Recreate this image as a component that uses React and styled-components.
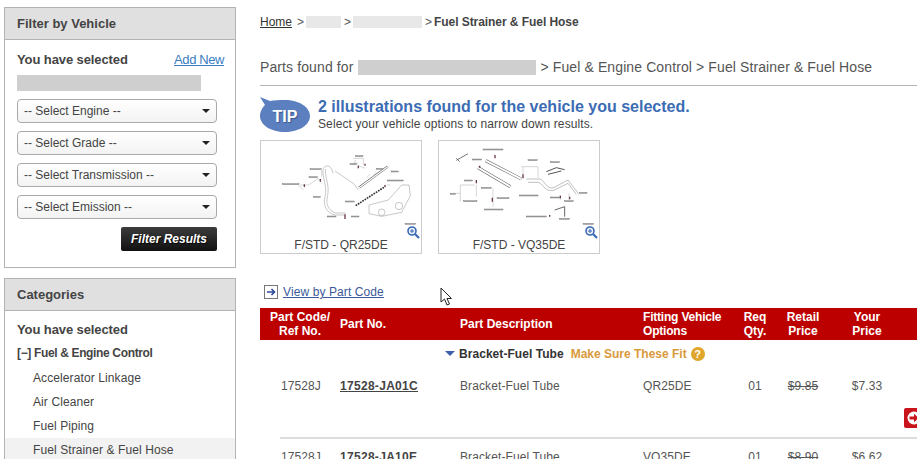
import React from "react";
import styled, { createGlobalStyle } from "styled-components";

const Global = createGlobalStyle`
  html, body { margin: 0; padding: 0; width: 917px; height: 459px; overflow: hidden; background: #fff; }
  body { font-family: "Liberation Sans", Arial, sans-serif; font-size: 12px; color: #444; }
  #root { width: 917px; height: 459px; overflow: hidden; }
`;

const Page = styled.div`
  display: flex;
  align-items: flex-start;
  padding: 7px 0 0 4px;
  width: 1000px;
`;
const Sidebar = styled.aside`
  width: 232px;
  flex: none;
  display: flex;
  flex-direction: column;
  gap: 10px;
`;
const Panel = styled.section`
  border: 1px solid #b3b3b3;
  background: #fff;
  height: ${(p) => p.$h}px;
  box-sizing: border-box;
`;
const PanelHead = styled.h2`
  margin: 0;
  height: 32px;
  line-height: 31px;
  box-sizing: border-box;
  background: #e0e0e0;
  border-bottom: 1px solid #b3b3b3;
  padding-left: 12px;
  font-size: 13px;
  font-weight: bold;
  color: #444;
`;
const PanelBody = styled.div`
  padding: ${(p) => p.$top}px 18px 0 12px;
`;
const SelectedRow = styled.div`
  display: flex;
  justify-content: space-between;
  align-items: center;
  height: 16px;
`;
const Strong = styled.strong`
  font-size: 13px;
  letter-spacing: -0.1px;
  color: #444;
`;
const BlueLink = styled.a`
  color: #3a7dbf;
  font-size: 13px;
  letter-spacing: -0.4px;
  text-decoration: underline;
  margin-right: -7px;
`;
const Redact = styled.span`
  display: ${(p) => (p.$block ? "block" : "inline-block")};
  flex: none;
  width: ${(p) => p.$w}px;
  height: ${(p) => p.$h}px;
  background: ${(p) => p.$c || "#cfcfcf"};
`;
const VehicleBar = styled(Redact)`
  margin: 8px 0;
`;
const FoundBar = styled(Redact)`
  margin-left: 1px;
`;
const Select = styled.div`
  box-sizing: border-box;
  width: 200px;
  height: 24px;
  margin-bottom: 8px;
  padding: 0 6px 1px 6px;
  border: 1px solid #a9a9a9;
  border-radius: 4px;
  background: linear-gradient(#fff, #f3f3f3);
  display: flex;
  align-items: center;
  justify-content: space-between;
  font-size: 12px;
  color: #444;
  &::after {
    content: "";
    border-left: 4px solid transparent;
    border-right: 4px solid transparent;
    border-top: 4px solid #222;
  }
`;
const FilterButton = styled.button`
  display: block;
  margin: 8px 0 0 104px;
  width: 96px;
  height: 24px;
  padding: 0;
  border: 0;
  border-radius: 2px;
  background: linear-gradient(#3c3c3c, #111);
  color: #fff;
  font: italic bold 12px "Liberation Sans", Arial, sans-serif;
  text-shadow: 1px 1px 1px #000;
`;
const TreeHead = styled.div`
  font-weight: bold;
  font-size: 12px;
  line-height: 24px;
  letter-spacing: -0.35px;
  color: #444;
  margin: 4px 0 1px;
`;
const TreeList = styled.ul`
  list-style: none;
  margin: 0 -18px 0 -12px;
  padding: 0;
`;
const TreeItem = styled.li`
  height: 24px;
  line-height: 24px;
  padding-left: 28px;
  font-size: 12px;
  letter-spacing: 0.1px;
  color: #444;
  background: ${(p) => (p.$active ? "#f2f2f2" : "transparent")};
`;

const Main = styled.main`
  margin-left: 24px;
  width: 700px;
  flex: none;
`;
const Crumbs = styled.nav`
  height: 14px;
  line-height: 14px;
  margin-top: 8px;
  font-size: 12px;
  color: #555;
  display: flex;
  align-items: center;
  gap: 3px;
`;
const CrumbLink = styled.a`
  color: #333;
  text-decoration: underline;
  margin-right: 2px;
`;
const Sep = styled.span`
  display: block;
  flex: none;
  width: 6px;
  white-space: nowrap;
`;
const CrumbCurrent = styled.b`
  color: #444;
  letter-spacing: -0.06px;
`;
const Found = styled.div`
  margin-top: 30px;
  padding-bottom: 10px;
  height: 16px;
  line-height: 16px;
  font-size: 14px;
  letter-spacing: 0.11px;
  color: #555;
  border-bottom: 1px solid #b5b5b5;
  display: flex;
  align-items: center;
  gap: 4px;
`;
const TipRow = styled.div`
  display: flex;
  margin-top: 11px;
  height: 36px;
`;
const TipBubble = styled.div`
  position: relative;
  width: 50px;
  height: 36px;
  flex: none;
  display: flex;
  align-items: flex-end;
  justify-content: center;
  padding-bottom: 7px;
  box-sizing: border-box;
  font-size: 16px;
  font-weight: bold;
  color: #fff;
  text-shadow: 1px 1px 1px #3a5a96;
  line-height: 18px;
  & > svg { position: absolute; left: 0; top: 0; }
  & > span { position: relative; }
`;
const TipText = styled.div`
  margin: 1px 0 0 8px;
`;
const TipTitle = styled.div`
  font-size: 16px;
  font-weight: bold;
  line-height: 18px;
  color: #3c6cb4;
`;
const TipSub = styled.div`
  font-size: 12px;
  line-height: 14px;
  letter-spacing: 0.1px;
  color: #444;
  margin-top: 1px;
`;
const Cards = styled.div`
  display: flex;
  gap: 16px;
  margin-top: 7px;
`;
const Card = styled.figure`
  position: relative;
  margin: 0;
  box-sizing: border-box;
  width: 162px;
  height: 114px;
  border: 1px solid #ccc;
  & > svg { display: block; }
`;
const Caption = styled.figcaption`
  text-align: center;
  font-size: 12px;
  line-height: 14px;
  color: #444;
  margin-top: 2px;
`;
const ZoomBadge = styled.svg`
  position: absolute;
  right: 1px;
  bottom: 14px;
`;
const ViewRow = styled.div`
  display: flex;
  align-items: center;
  gap: 5px;
  margin: 31px 0 0 4px;
  height: 14px;
`;
const ViewIcon = styled.svg`
  flex: none;
`;
const ViewLink = styled.a`
  color: #3c5a9a;
  font-size: 12px;
  letter-spacing: 0.1px;
  text-decoration: underline;
`;
const Cursor = styled.svg`
  position: absolute;
  left: 440px;
  top: 287px;
`;
const columns = "80px 120px 183px 92px 40px 56px 72px 57px";
const HeadRow = styled.div`
  display: grid;
  grid-template-columns: ${columns};
  margin-top: 9px;
  height: 32px;
  background: #bc0000;
  color: #fff;
  font-weight: bold;
  font-size: 12px;
  line-height: 14px;
  align-items: center;
`;
const HeadCell = styled.div`
  text-align: ${(p) => (p.$c ? "center" : "left")};
  letter-spacing: ${(p) => (p.$tight ? "-0.2px" : "0")};
`;
const GroupRow = styled.div`
  display: flex;
  align-items: center;
  height: 28px;
  padding-left: 185px;
  font-size: 12px;
  font-weight: bold;
  gap: 5px;
`;
const GroupArrow = styled.span`
  border-left: 5px solid transparent;
  border-right: 5px solid transparent;
  border-top: 5px solid #3d5fae;
  margin-right: -1px;
  margin-top: -2px;
`;
const GroupName = styled.span`
  color: #333;
  letter-spacing: 0.05px;
`;
const Fit = styled.span`
  color: #d99a3c;
  margin-left: 2px;
`;
const Help = styled.span`
  width: 14px;
  height: 14px;
  border-radius: 50%;
  background: #e0a52b;
  color: #fff;
  font-size: 11px;
  line-height: 14px;
  text-align: center;
  margin-left: -1px;
`;
const PartRow = styled.div`
  margin-left: 20px;
  border-bottom: ${(p) => (p.$last ? "0" : "2px solid #ddd")};
  height: ${(p) => p.$h}px;
  box-sizing: border-box;
  padding-top: ${(p) => p.$top}px;
`;
const PartCells = styled.div`
  display: grid;
  grid-template-columns: 60px 120px 183px 92px 40px 56px 72px;
  height: 14px;
  line-height: 14px;
  font-size: 12px;
  letter-spacing: 0.1px;
  color: #555;
`;
const PartCell = styled.div`
  text-align: ${(p) => (p.$c ? "center" : "left")};
  padding-left: ${(p) => (p.$pad ? "1px" : "0")};
  white-space: nowrap;
`;
const PartNo = styled.a`
  font-weight: bold;
  letter-spacing: 0.3px;
  color: #444;
  text-decoration: ${(p) => (p.$u ? "underline" : "none")};
`;
const Old = styled.s`
  color: #555;
`;
const Actions = styled.div`
  margin: 15px 0 0 624px;
`;
const AddButton = styled.button`
  display: flex;
  align-items: center;
  width: 40px;
  height: 20px;
  padding: 0 0 0 3px;
  border: 0;
  border-radius: 2px;
  background: #c8141a;
`;

const Labels = ({ items }) =>
  items.map(([x, y, w], i) => (
    <rect key={i} x={x} y={y} width={w} height="3" fill="#b4b4b4" />
  ));

const Diagram1 = () => (
  <svg width="160" height="95" viewBox="18 18 480 285" fill="none" stroke="#666" strokeWidth="1.2">
    <Labels items={[[82,146,50],[165,101,34],[162,125,26],[176,184,20],[217,243,26],[290,243,22],[272,198,26],[397,135,48],[408,108,22],[302,62,22],[285,86,20],[365,100,18],[450,265,32]]} />
    <path d="M205 100C215 84 232 96 234 115M240 108L296 146L310 165M205 100C200 130 218 150 210 185C204 210 212 232 240 240L272 240M212 102C208 130 226 150 217 186C212 208 220 226 242 234L272 234" stroke="#999" strokeWidth="1.6" />
    <path d="M135 150H160L190 130L200 145M200 105V125M130 150L145 165M300 75V90M295 70H325V90M290 85H310M335 128L345 118M355 120L365 110M305 90L330 100M405 150H395" stroke="#999" />
    <path d="M312 158L398 95" stroke="#555" strokeWidth="7" />
    <path d="M312 158L398 95" stroke="#fff" strokeWidth="4" />
    <path d="M302 212L390 155" stroke="#333" strokeWidth="5" strokeDasharray="5 3" />
    <path d="M342 210L400 195L440 150L462 150L466 182L440 232L380 244L342 236Z" stroke="#888" strokeWidth="1.4" />
    <circle cx="380" cy="232" r="10" stroke="#888" strokeWidth="1.4" />
    <circle cx="432" cy="213" r="11" stroke="#888" strokeWidth="1.4" />
    <path d="M148 148v8M196 132v8M270 238v14M310 92v8M330 86v6M390 150v6" stroke="#6a3a50" strokeWidth="4" />
  </svg>
);

const Diagram2 = () => (
  <svg width="160" height="95" viewBox="18 18 480 285" fill="none" stroke="#666" strokeWidth="1.2">
    <Labels items={[[150,42,60],[118,72,28],[285,74,28],[352,80,28],[95,135,24],[52,175,16],[92,197,40],[145,157,30],[192,188,36],[260,180,55],[155,222,55],[280,243,60],[380,250,30],[352,186,28],[440,172,22],[395,197,26],[450,265,32]]} />
    <path d="M70 76L105 56M70 70L80 80" stroke="#444" strokeWidth="2.2" />
    <path d="M135 98L232 155" stroke="#555" strokeWidth="9" />
    <path d="M135 98L232 155" stroke="#fff" strokeWidth="6" />
    <path d="M158 77L265 132" stroke="#555" strokeWidth="9" />
    <path d="M158 77L265 132" stroke="#fff" strokeWidth="6" />
    <path d="M280 132H320C335 135 340 165 362 158L405 135L438 178M285 142H315C330 145 335 172 362 166L405 145L430 178" stroke="#888" strokeWidth="1.6" />
    <path d="M340 110L370 98L395 104M345 118L385 108" stroke="#555" strokeWidth="3" />
    <path d="M82 150H125M82 150V200M60 175H82M130 150V185M180 160V215M265 95H315V130M270 95V120M382 180V195M408 175V195" stroke="#999" />
    <path d="M365 225L395 215L395 245" stroke="#666" strokeWidth="3" />
    <path d="M186 60v10M140 92v6M270 118v12M130 135v10M382 182v8M410 185v8M350 240v5M178 188v12" stroke="#6a3a50" strokeWidth="4" />
  </svg>
);

const ZoomIcon = () => (
  <ZoomBadge width="13" height="13" viewBox="0 0 13 13" fill="none">
    <circle cx="5" cy="5" r="4" stroke="#3a69b4" strokeWidth="1.6" fill="#eaf0fa" />
    <path d="M8 8L12 12" stroke="#3a69b4" strokeWidth="2.2" />
    <path d="M3 5H7M5 3V7" stroke="#3a69b4" strokeWidth="1" />
  </ZoomBadge>
);

export default function App() {
  return (
    <>
      <Global />
      <Page>
        <Sidebar>
          <Panel $h={261}>
            <PanelHead>Filter by Vehicle</PanelHead>
            <PanelBody $top={11}>
              <SelectedRow>
                <Strong>You have selected</Strong>
                <BlueLink>Add New</BlueLink>
              </SelectedRow>
              <VehicleBar $block $w={184} $h={16} />
              <Select>-- Select Engine --</Select>
              <Select>-- Select Grade --</Select>
              <Select>-- Select Transmission --</Select>
              <Select>-- Select Emission --</Select>
              <FilterButton>Filter Results</FilterButton>
            </PanelBody>
          </Panel>
          <Panel $h={300}>
            <PanelHead>Categories</PanelHead>
            <PanelBody $top={10}>
              <SelectedRow>
                <Strong>You have selected</Strong>
              </SelectedRow>
              <TreeHead>[−] Fuel &amp; Engine Control</TreeHead>
              <TreeList>
                <TreeItem>Accelerator Linkage</TreeItem>
                <TreeItem>Air Cleaner</TreeItem>
                <TreeItem>Fuel Piping</TreeItem>
                <TreeItem $active>Fuel Strainer &amp; Fuel Hose</TreeItem>
              </TreeList>
            </PanelBody>
          </Panel>
        </Sidebar>
        <Main>
          <Crumbs>
            <CrumbLink>Home</CrumbLink>
            <Sep>&gt;</Sep>
            <Redact $w={35} $h={12} $c="#e8e8e8" />
            <Sep>&gt;</Sep>
            <Redact $w={69} $h={12} $c="#e8e8e8" />
            <Sep>&gt;</Sep>
            <CrumbCurrent>Fuel Strainer &amp; Fuel Hose</CrumbCurrent>
          </Crumbs>
          <Found>
            Parts found for <FoundBar $w={178} $h={15} /> &gt; Fuel &amp; Engine Control &gt; Fuel Strainer &amp; Fuel Hose
          </Found>
          <TipRow>
            <TipBubble>
              <svg width="50" height="36" viewBox="0 0 50 36">
                <path d="M0 0L10 4C14 3.2 20 3 25 3C39 3 50 10 50 19C50 28 39 35 25 35C11 35 0 28 0 19C0 14 3 10 5 8Z" fill="#5b7fbf" />
              </svg>
              <span>TIP</span>
            </TipBubble>
            <TipText>
              <TipTitle>2 illustrations found for the vehicle you selected.</TipTitle>
              <TipSub>Select your vehicle options to narrow down results.</TipSub>
            </TipText>
          </TipRow>
          <Cards>
            <Card>
              <Diagram1 />
              <ZoomIcon />
              <Caption>F/STD - QR25DE</Caption>
            </Card>
            <Card>
              <Diagram2 />
              <ZoomIcon />
              <Caption>F/STD - VQ35DE</Caption>
            </Card>
          </Cards>
          <ViewRow>
            <ViewIcon width="14" height="14" viewBox="0 0 14 14" fill="none">
              <rect x="0.5" y="0.5" width="13" height="13" fill="#fff" stroke="#777" />
              <path d="M3 7H10M7.5 4L10.5 7L7.5 10" stroke="#2f4a9a" strokeWidth="1.6" />
            </ViewIcon>
            <ViewLink>View by Part Code</ViewLink>
          </ViewRow>
          <HeadRow>
            <HeadCell $c>Part Code/<br />Ref No.</HeadCell>
            <HeadCell>Part No.</HeadCell>
            <HeadCell>Part Description</HeadCell>
            <HeadCell $tight>Fitting Vehicle<br />Options</HeadCell>
            <HeadCell $c>Req<br />Qty.</HeadCell>
            <HeadCell $c>Retail<br />Price</HeadCell>
            <HeadCell $c>Your<br />Price</HeadCell>
            <HeadCell />
          </HeadRow>
          <GroupRow>
            <GroupArrow />
            <GroupName>Bracket-Fuel Tube</GroupName>
            <Fit>Make Sure These Fit</Fit>
            <Help>?</Help>
          </GroupRow>
          <PartRow $h={71} $top={11}>
            <PartCells>
              <PartCell $pad>17528J</PartCell>
              <PartCell><PartNo $u>17528-JA01C</PartNo></PartCell>
              <PartCell>Bracket-Fuel Tube</PartCell>
              <PartCell>QR25DE</PartCell>
              <PartCell $c>01</PartCell>
              <PartCell $c><Old>$9.85</Old></PartCell>
              <PartCell $c>$7.33</PartCell>
            </PartCells>
            <Actions>
              <AddButton>
                <svg width="14" height="14" viewBox="0 0 14 14">
                  <circle cx="7" cy="7" r="6.5" fill="#fff" />
                  <path d="M2.5 5.5H7V2.8L11.5 7L7 11.2V8.5H2.5Z" fill="#c8141a" />
                </svg>
              </AddButton>
            </Actions>
          </PartRow>
          <PartRow $h={40} $top={11} $last>
            <PartCells>
              <PartCell $pad>17528J</PartCell>
              <PartCell><PartNo>17528-JA10E</PartNo></PartCell>
              <PartCell>Bracket-Fuel Tube</PartCell>
              <PartCell>VQ35DE</PartCell>
              <PartCell $c>01</PartCell>
              <PartCell $c><Old>$8.90</Old></PartCell>
              <PartCell $c>$6.62</PartCell>
            </PartCells>
          </PartRow>
        </Main>
      </Page>
      <Cursor width="14" height="20" viewBox="0 0 14 20">
        <path d="M1 1V15L4.5 12L7 18L9.5 17L7 11.5H11.5Z" fill="#fff" stroke="#222" strokeWidth="1" />
      </Cursor>
    </>
  );
}
